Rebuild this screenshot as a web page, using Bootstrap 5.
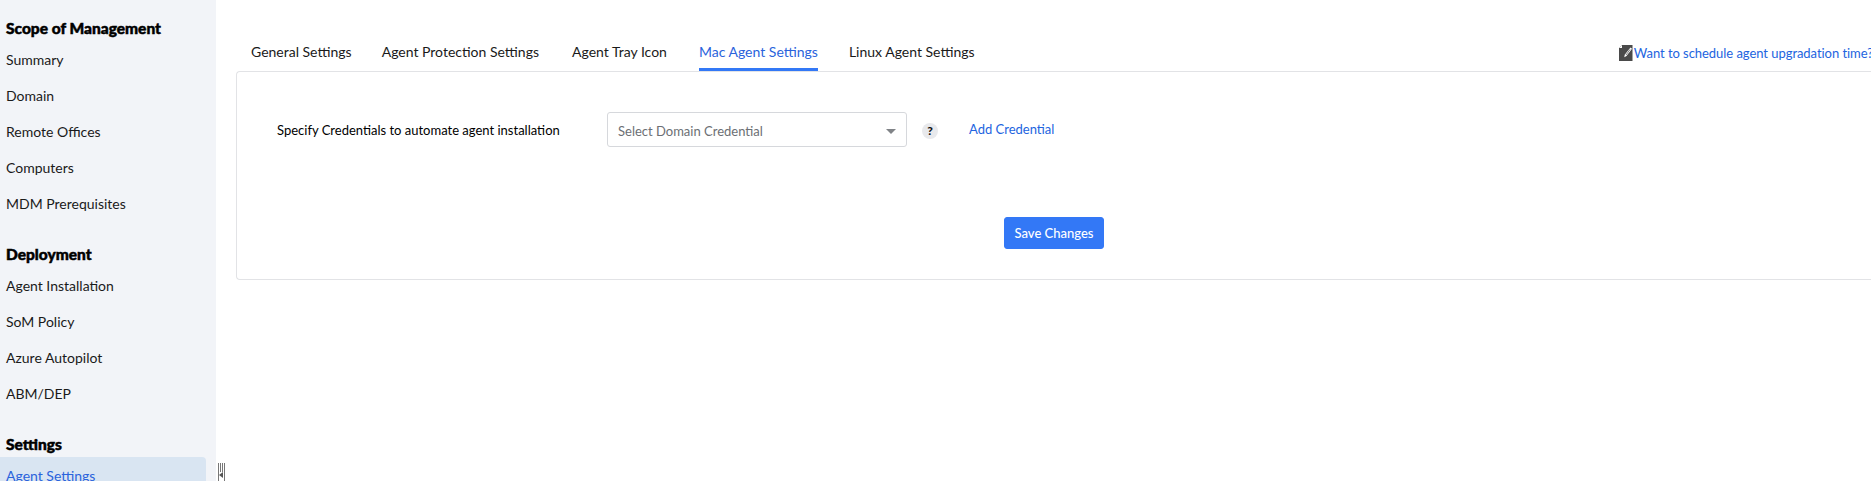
<!DOCTYPE html>
<html lang="en">
<head>
<meta charset="utf-8">
<title>Agent Settings</title>
<link href="https://cdn.jsdelivr.net/npm/bootstrap@5.3.0/dist/css/bootstrap.min.css" rel="stylesheet">
<style>
html,body{height:481px;overflow:hidden}
body{font-family:Lato,"Liberation Sans",sans-serif;font-size:14px;color:#000;background:#fff}
.shell{height:481px}
.sidenav{width:216px;flex:none;background:#f2f4f8;padding-top:19px;height:481px;overflow:hidden}
.side-head{font-weight:900;font-size:15.5px;line-height:18px;height:18px;padding-left:6px;margin:0;color:#000;-webkit-text-stroke:.5px #000}
.side-list{margin:5px 0 0;padding:0;list-style:none}
.side-list+.side-head{margin-top:23px}
.side-link{display:block;height:36px;line-height:36px;padding-left:6px;width:206px;color:#1a1a1a;text-decoration:none;font-size:14px;border-radius:0 4px 4px 0}
.side-link.on{background:#d9e5f2;color:#2a63dc;height:37px;line-height:38px;margin-top:-1px}
.grip{width:7px;height:18px;flex:none;align-self:flex-end;margin-left:2px}
.work{flex:1 1 auto;min-width:0;padding:33px 0 0 11px}
.tabbar{height:38px;align-items:flex-start}
.tabitem{color:#1a1a1a;text-decoration:none;font-size:14px;line-height:40px;margin-left:15px;margin-right:15px;white-space:nowrap;margin-top:-1px;height:39px}
.tabitem.on{color:#2a63dc;border-bottom:3px solid #3378f6}
.tab-gap2{margin-right:18px}
.tab-gap3{margin-right:17px}
.tab-gap1{margin-right:16px}
.sched{margin-left:auto;white-space:nowrap;color:#2264e0;text-decoration:none;font-size:13px;letter-spacing:-.05px;line-height:20px;margin-right:-2px;margin-top:10px;display:flex;align-items:center;gap:1px}
.panel{border:1px solid #e2e3e6;border-right:0;border-radius:4px 0 0 4px;height:209px;padding-top:40px;background:#fff}
.lbl{margin-left:40px;width:330px;flex:none;font-size:13px;margin-top:2px}
.sel-box{width:300px;height:35px;flex:none;border:1px solid #d6d8dc;border-radius:3px;color:#6c6f74;font-size:13px;padding:4px 10px 0;background:#fff}
.caret-shape{width:0;height:0;border-left:5px solid transparent;border-right:5px solid transparent;border-top:5px solid #808387}
.help-dot{width:16px;height:16px;border-radius:50%;background:#e8e9ec;color:#111;font-weight:900;font-size:12px;line-height:16px;text-align:center;margin-left:15px;margin-top:2px;flex:none}
.add-link{color:#2264e0;text-decoration:none;font-size:13px;margin-left:31px}
.save-btn{--bs-btn-bg:#3378f6;--bs-btn-border-color:#3378f6;--bs-btn-padding-x:0;--bs-btn-padding-y:0;--bs-btn-font-size:13px;--bs-btn-border-radius:3px;width:100px;height:32px;margin-top:70px;padding-top:1px;font-weight:500}
</style>
</head>
<body>
<div class="d-flex shell">
  <aside class="sidenav">
    <h6 class="side-head">Scope of Management</h6>
    <ul class="side-list">
      <li><a class="side-link" href="#">Summary</a></li>
      <li><a class="side-link" href="#">Domain</a></li>
      <li><a class="side-link" href="#">Remote Offices</a></li>
      <li><a class="side-link" href="#">Computers</a></li>
      <li><a class="side-link" href="#">MDM Prerequisites</a></li>
    </ul>
    <h6 class="side-head">Deployment</h6>
    <ul class="side-list">
      <li><a class="side-link" href="#">Agent Installation</a></li>
      <li><a class="side-link" href="#">SoM Policy</a></li>
      <li><a class="side-link" href="#">Azure Autopilot</a></li>
      <li><a class="side-link" href="#">ABM/DEP</a></li>
    </ul>
    <h6 class="side-head">Settings</h6>
    <ul class="side-list">
      <li><a class="side-link on" href="#">Agent Settings</a></li>
    </ul>
  </aside>
  <svg class="grip" viewBox="0 0 7 18" aria-hidden="true">
    <path d="M0 0h1v18H0zM2 0h1v9H2zM4 0h1v9H4zM6 0h1v18H6z" fill="#777"/>
    <path d="M5 9v6L1 12z" fill="#555"/>
  </svg>
  <main class="work">
    <div class="d-flex tabbar">
      <a class="tabitem" href="#">General Settings</a>
      <a class="tabitem tab-gap2" href="#">Agent Protection Settings</a>
      <a class="tabitem tab-gap3" href="#">Agent Tray Icon</a>
      <a class="tabitem tab-gap1 on" href="#">Mac Agent Settings</a>
      <a class="tabitem" href="#">Linux Agent Settings</a>
      <a class="sched" href="#">
        <svg width="14" height="16" viewBox="0 0 14 16" aria-hidden="true">
          <path d="M3 0h10.5v16H0V3z" fill="#4a4a4a"/>
          <path d="M3 0v3H0z" fill="#fff"/>
          <path d="M11.5 2.5l1.5 1.2-5.5 7.3-2.2 1.2.4-2.5z" fill="#fff"/>
          <path d="M11 4.5L7 10" stroke="#4a4a4a" stroke-width=".7"/>
        </svg>
        Want to schedule agent upgradation time?
      </a>
    </div>
    <section class="panel">
      <div class="d-flex align-items-center">
        <span class="lbl">Specify Credentials to automate agent installation</span>
        <div class="sel-box d-flex align-items-center justify-content-between">
          <span>Select Domain Credential</span>
          <span class="caret-shape"></span>
        </div>
        <span class="help-dot">?</span>
        <a class="add-link" href="#">Add Credential</a>
      </div>
      <div class="d-flex justify-content-center">
        <button type="button" class="btn btn-primary save-btn">Save Changes</button>
      </div>
    </section>
  </main>
</div>
<script src="https://cdn.jsdelivr.net/npm/bootstrap@5.3.0/dist/js/bootstrap.bundle.min.js"></script>
</body>
</html>
